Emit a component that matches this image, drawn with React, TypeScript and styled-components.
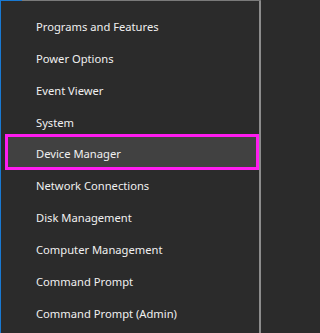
import React from 'react'
import styled, { createGlobalStyle } from 'styled-components'

const items = [
  'Programs and Features',
  'Power Options',
  'Event Viewer',
  'System',
  'Device Manager',
  'Network Connections',
  'Disk Management',
  'Computer Management',
  'Command Prompt',
  'Command Prompt (Admin)',
]

const GlobalStyle = createGlobalStyle`
  html, body {
    margin: 0;
    padding: 0;
    background: #2b2b2b;
  }
  body {
    font-family: 'Noto Sans', 'Open Sans', sans-serif;
  }
`

const App: React.FC = () => {
  return (
    <Frame>
      <GlobalStyle />
      <Menu>
        {items.map((label) => (
          <Item key={label} selected={label === 'Device Manager'}>
            {label}
          </Item>
        ))}
      </Menu>
    </Frame>
  )
}

export default App

const Frame = styled.div`
  width: 261px;
  height: 333px;
  box-sizing: border-box;
  padding-top: 1px;
  background: linear-gradient(to right, #1979d2 22px, #7a7a7a 22px);
`

const Menu = styled.div`
  box-sizing: border-box;
  height: 332px;
  border-left: 1px solid #1979d2;
  border-right: 2px solid #8c8c8c;
  background: #2b2b2b;
  padding: 10px 0 0 4px;
  display: flex;
  flex-direction: column;
`

const Item = styled.div<{ selected?: boolean }>`
  box-sizing: border-box;
  flex: none;
  height: ${(p) => (p.selected ? '35.8px' : '31.8px')};
  margin-top: ${(p) => (p.selected ? '-4px' : '0')};
  padding-top: ${(p) => (p.selected ? '2px' : '0')};
  display: flex;
  align-items: center;
  padding-left: ${(p) => (p.selected ? '28px' : '31px')};
  font-size: 11.2px;
  color: #f0f0f0;
  white-space: nowrap;
  background: ${(p) => (p.selected ? '#414141' : 'transparent')};
  border: ${(p) => (p.selected ? '3px solid #ff1cf0' : 'none')};
`
